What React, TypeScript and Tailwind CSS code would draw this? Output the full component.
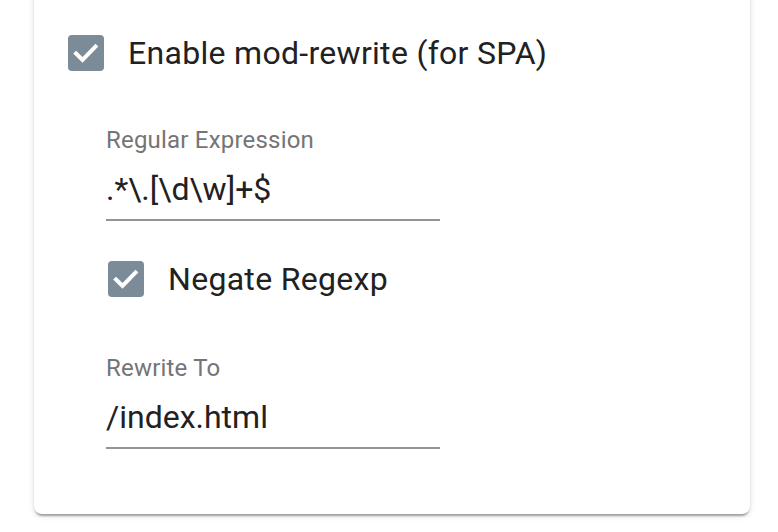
import type { ReactNode } from "react";

function CheckBox() {
  return (
    <span className="flex h-[36px] w-[36px] shrink-0 items-center justify-center rounded-[4px] bg-[#7c8b98]">
      <svg viewBox="0 0 36 36" className="h-[36px] w-[36px]" fill="none">
        <path
          d="M8 18.5l6.5 6.5 13-13.5"
          stroke="#ffffff"
          strokeWidth={4}
          strokeLinecap="square"
          strokeLinejoin="miter"
        />
      </svg>
    </span>
  );
}

function CheckRow({ children, className = "" }: { children: ReactNode; className?: string }) {
  return (
    <label className={`flex items-center gap-[24px] ${className}`}>
      <CheckBox />
      <span className="text-[32px] leading-[38px] tracking-[0.3px] text-[#212121]">{children}</span>
    </label>
  );
}

function Field({ label, value }: { label: string; value: string }) {
  return (
    <div className="flex w-[334px] flex-col">
      <span className="h-[28px] text-[24px] leading-[28px] tracking-[0.2px] text-[#757575]">{label}</span>
      <div className="mt-[16px] border-b-2 border-[#949494] pb-[11px] text-[32px] leading-[38px] text-[#212121]">
        {value}
      </div>
    </div>
  );
}

export default function App() {
  return (
    <div className="min-h-[532px] w-[778px] overflow-hidden bg-white font-['Roboto',sans-serif]">
      <div className="ml-[34px] mr-[28px] -mt-[20px] rounded-b-[8px] bg-white pb-[65px] pl-[34px] pt-[54px] shadow-[0_4px_2px_-2px_rgba(0,0,0,0.2),0_2px_2px_0_rgba(0,0,0,0.14),0_2px_6px_0_rgba(0,0,0,0.12)]">
        <CheckRow>Enable mod-rewrite (for SPA)</CheckRow>
        <div className="ml-[38px] mt-[54px] flex flex-col">
          <Field label="Regular Expression" value=".*\.[\d\w]+$" />
          <CheckRow className="ml-[2px] mt-[39px]">Negate Regexp</CheckRow>
          <div className="mt-[56px]">
            <Field label="Rewrite To" value="/index.html" />
          </div>
        </div>
      </div>
    </div>
  );
}
